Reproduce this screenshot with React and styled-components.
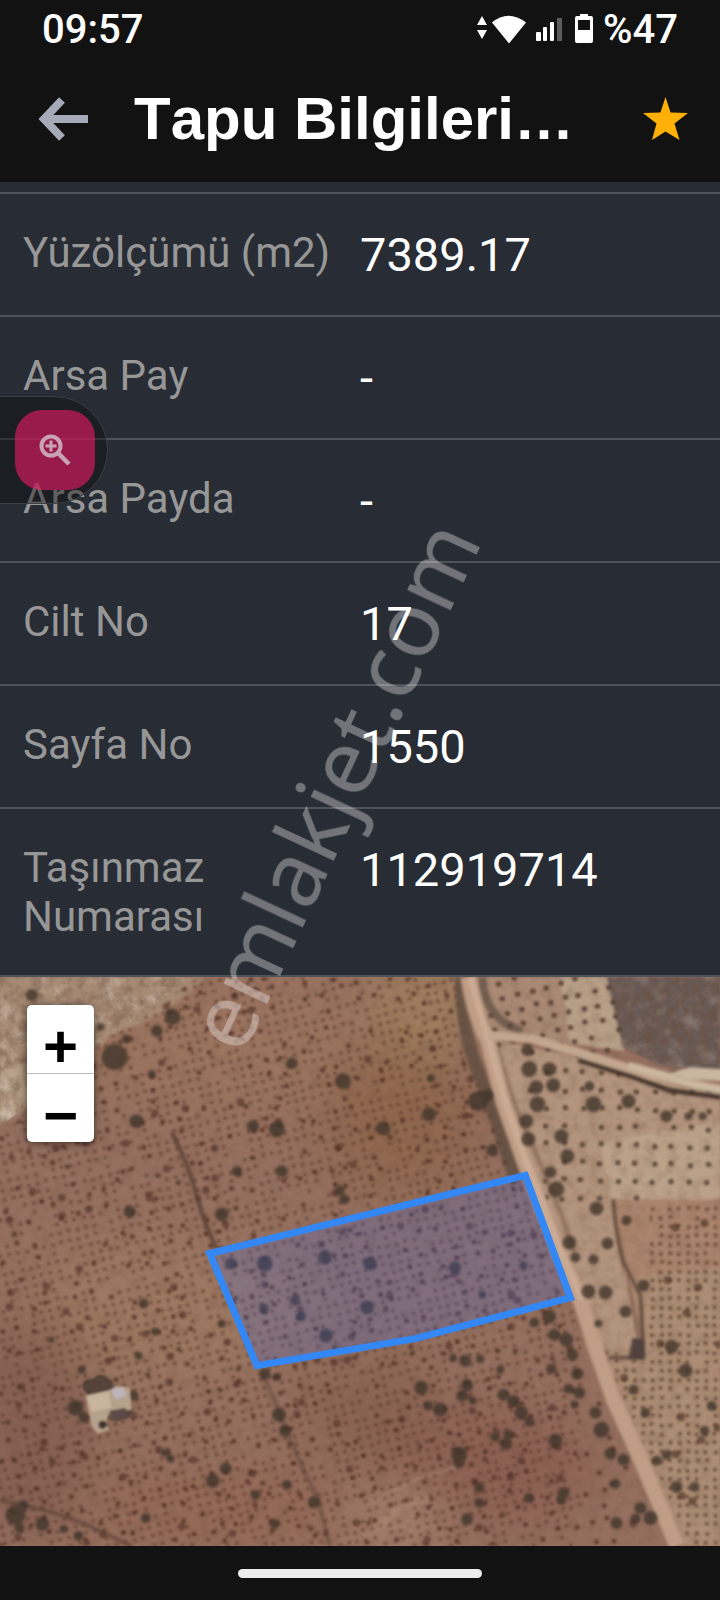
import React, { useState } from 'react';
import styled, { createGlobalStyle } from 'styled-components';

const GlobalStyle = createGlobalStyle`
  * {
    box-sizing: border-box;
  }

  body {
    margin: 0;
    background: #121212;
    font-family: Roboto, 'Noto Sans', sans-serif;
  }

  button {
    font: inherit;
    border: none;
    padding: 0;
    background: none;
    cursor: pointer;
  }
`;

const deedRows = [
  { label: 'Yüzölçümü (m2)', value: '7389.17' },
  { label: 'Arsa Pay', value: '-' },
  { label: 'Arsa Payda', value: '-' },
  { label: 'Cilt No', value: '17' },
  { label: 'Sayfa No', value: '1550' },
  { label: 'Taşınmaz Numarası', value: '112919714' },
];

// small seeded generator so the trees stay in place between renders
const makeRandom = (seed) => {
  let s = seed;
  return () => {
    s = (s * 16807) % 2147483647;
    return s / 2147483647;
  };
};

// rows of trees as one path of zero length strokes
const grove = (seed, [x0, y0, x1, y1], step, angle, jitter, keep) => {
  const rnd = makeRandom(seed);
  const cos = Math.cos(angle);
  const sin = Math.sin(angle);
  const cx = (x0 + x1) / 2;
  const cy = (y0 + y1) / 2;
  const half = Math.hypot(x1 - x0, y1 - y0) / 2;
  let d = '';
  for (let u = -half; u < half; u += step) {
    for (let v = -half; v < half; v += step) {
      const a = u + (rnd() - 0.5) * jitter;
      const b = v + (rnd() - 0.5) * jitter;
      const x = cx + a * cos - b * sin;
      const y = cy + a * sin + b * cos;
      const kept = rnd() < keep;
      if (kept && x > x0 && x < x1 && y > y0 && y < y1) {
        d += `M${x.toFixed(1)} ${y.toFixed(1)}h.01`;
      }
    }
  }
  return d;
};

const westSmall = grove(11, [0, 0, 580, 568], 9, -0.24, 2, 0.75);
const westMid = grove(23, [0, 0, 640, 568], 17, -0.24, 11, 0.6);
const westLarge = grove(37, [0, 0, 640, 568], 36, -0.3, 34, 0.45);
const northSmall = grove(5, [490, 0, 620, 80], 15, -0.25, 3, 0.95);
const paleMid = grove(71, [530, 92, 720, 222], 18, 0.02, 3, 0.9);
const eastSmall = grove(83, [590, 225, 720, 568], 9, 0, 2, 0.85);
const eastLarge = grove(97, [580, 235, 720, 568], 27, 0.1, 20, 0.6);

// [x, y, radius]
const trees = [
  [115, 80, 13], [173, 40, 8], [157, 54, 6], [137, 144, 7], [277, 152, 8], [343, 104, 8],
  [292, 86, 6], [253, 149, 6], [237, 194, 5], [282, 194, 6], [222, 237, 7], [130, 234, 6],
  [340, 213, 5], [344, 222, 5], [32, 18, 6], [101, 50, 4], [126, 62, 4], [152, 97, 4],
  [231, 286, 6], [265, 286, 8], [325, 280, 7], [370, 286, 7], [455, 290, 6], [523, 288, 4],
  [264, 331, 5], [295, 323, 5], [301, 339, 5], [326, 358, 7], [367, 330, 7], [482, 317, 4],
  [478, 124, 10], [487, 118, 6], [429, 137, 7], [383, 151, 7], [431, 101, 4], [492, 173, 6],
  [527, 73, 6], [529, 92, 8], [549, 92, 7], [536, 110, 7], [553, 108, 7], [589, 109, 5],
  [537, 127, 8], [593, 127, 8], [628, 124, 7], [666, 139, 6], [702, 139, 4], [688, 139, 4],
  [526, 144, 7], [528, 162, 7], [561, 159, 7], [567, 179, 7], [550, 195, 6], [556, 212, 8],
  [596, 231, 7], [569, 265, 7], [607, 266, 6], [626, 243, 5], [575, 280, 5], [593, 282, 5],
  [588, 314, 7], [605, 315, 7], [625, 334, 6], [598, 346, 4], [671, 369, 7], [685, 393, 7],
  [643, 308, 6], [549, 339, 7], [534, 345, 5], [554, 357, 6], [566, 362, 7], [572, 377, 6],
  [551, 391, 5], [577, 396, 6], [568, 411, 5], [579, 415, 6], [574, 427, 4], [595, 435, 6],
  [601, 452, 8], [555, 463, 7], [610, 476, 6], [623, 482, 6], [465, 383, 6], [453, 380, 4],
  [480, 381, 4], [500, 392, 4], [421, 410, 7], [428, 428, 5], [440, 432, 7], [462, 418, 6],
  [467, 408, 6], [473, 423, 4], [503, 417, 6], [513, 423, 6], [521, 435, 7], [529, 444, 5],
  [495, 459, 5], [506, 466, 6], [508, 457, 5], [459, 477, 8], [459, 484, 6], [479, 510, 5],
  [479, 525, 5], [529, 520, 5], [563, 515, 6], [561, 522, 5], [615, 506, 5], [616, 545, 6],
  [650, 540, 7], [640, 530, 6], [635, 541, 5], [676, 509, 6], [694, 509, 5], [666, 477, 5],
  [656, 483, 5], [645, 435, 5], [633, 412, 5], [711, 428, 5], [704, 453, 5], [467, 541, 6],
  [16, 537, 10], [24, 527, 5], [43, 546, 7], [20, 550, 5], [79, 558, 5], [64, 551, 4],
  [146, 540, 5], [213, 503, 7], [226, 491, 6], [256, 517, 5], [287, 507, 5], [314, 524, 6],
  [275, 546, 5], [279, 437, 7], [285, 453, 6], [265, 396, 6], [277, 399, 4], [144, 326, 5],
  [52, 362, 3], [82, 392, 4], [139, 378, 4], [222, 346, 4], [155, 354, 4], [165, 475, 4],
  [171, 481, 4], [76, 430, 8], [134, 418, 5], [102, 404, 7], [90, 408, 7], [84, 440, 5],
];

const Page = styled.div`
  position: relative;
  display: flex;
  flex-direction: column;
  min-height: 100vh;
  overflow: hidden;
  background: #121212;
`;

const StatusBar = styled.div`
  display: flex;
  align-items: center;
  justify-content: space-between;
  height: 60px;
  padding: 0 42px;
  color: #fff;
  font-size: 40px;
  font-weight: 500;
  line-height: 60px;
`;

const StatusIcons = styled.div`
  display: flex;
  align-items: center;
  gap: 8px;
`;

const Header = styled.header`
  display: flex;
  align-items: center;
  height: 122px;
  padding: 0 28px 4px 36px;
`;

const HeaderButton = styled.button`
  display: flex;
  flex: none;
  color: ${({ $color }) => $color};
`;

const Title = styled.h1`
  flex: 1;
  min-width: 0;
  margin: 0 24px 0 44px;
  overflow: hidden;
  color: #fff;
  font-family: 'Liberation Sans', Arial, sans-serif;
  font-size: 60px;
  line-height: 72px;
  font-weight: 700;
  font-kerning: none;
  white-space: nowrap;
`;

const Details = styled.main`
  padding-top: 10px;
  background: #282c34;
`;

const DeedTable = styled.table`
  width: 100%;
  border-bottom: 2px solid #4e5259;
  border-spacing: 0;
  table-layout: fixed;
`;

const DeedRow = styled.tr`
  th,
  td {
    padding-top: 34px;
    padding-bottom: 34px;
    border-top: 2px solid #4e5259;
    vertical-align: top;
    text-align: left;
  }
`;

const Label = styled.th`
  width: 50%;
  padding: 0 8px 0 23px;
  color: #979797;
  font-size: 42px;
  line-height: 49px;
  font-weight: 400;
`;

const Value = styled.td`
  padding: 0 8px 0 0;
  color: #fff;
  font-size: 47px;
  line-height: 53px;
`;

const MapArea = styled.section`
  position: relative;
  flex: 1;
  min-height: 480px;
  overflow: hidden;
  background: #8f6a55;
`;

const MapCanvas = styled.svg`
  position: absolute;
  inset: 0;
  display: block;
  width: 100%;
  height: 100%;
`;

const ZoomControl = styled.div`
  position: absolute;
  top: 28px;
  left: 27px;
  display: flex;
  flex-direction: column;
  width: 67px;
  border-radius: 5px;
  background: #fff;
  box-shadow: 0 1px 8px rgba(0, 0, 0, 0.6);
`;

const ZoomButton = styled.button`
  height: 68px;
  padding-top: 16px;
  color: #000;
  font-family: 'Liberation Sans', Arial, sans-serif;
  font-size: 60px;
  font-weight: 700;
  line-height: 52px;

  & + & {
    height: 69px;
    border-top: 1px solid #bbb;
  }
`;

const NavBar = styled.div`
  display: flex;
  justify-content: center;
  align-items: center;
  height: 54px;
`;

const HomeIndicator = styled.div`
  width: 34%;
  height: 9px;
  border-radius: 5px;
  background: #ededed;
`;

const FloatingTab = styled.div`
  position: absolute;
  top: 396px;
  left: -2px;
  padding: 13px 12px 13px 16px;
  border: 1px solid #3a3e45;
  border-radius: 0 54px 54px 0;
  background: rgba(8, 8, 8, 0.38);
`;

const FloatingButton = styled.button`
  display: flex;
  align-items: center;
  justify-content: center;
  width: 80px;
  height: 80px;
  border-radius: 27px;
  background: rgba(230, 24, 101, 0.62);
  color: #c7a3b4;
`;

const Watermark = styled.div`
  position: absolute;
  top: 49%;
  left: 46%;
  color: rgba(255, 255, 255, 0.34);
  font-family: 'Noto Sans', 'Open Sans', sans-serif;
  font-size: 90px;
  line-height: 120px;
  pointer-events: none;
  transform: translate(-50%, -50%) rotate(-65deg);
`;

const SystemIcons = () => (
  <svg width="118" height="32" viewBox="0 0 118 32" fill="#fff" aria-hidden="true">
    <path d="M5 2l5 9H0z" />
    <path d="M0 16h10l-5 9z" />
    <path d="M15 8.500Q31-5 49 8.500L32 29.500z" />
    <rect x="59" y="18" width="5" height="9" rx="1" />
    <rect x="66" y="13" width="4" height="14" rx="1" />
    <rect x="73" y="8" width="4" height="19" rx="1" />
    <rect x="80" y="4" width="5" height="23" fill="#5c5c5c" />
    <path
      fillRule="evenodd"
      d="M103 0h8v2h3q2 0 2 2v23q0 2-2 2h-14q-2 0-2-2V4q0-2 2-2h3zM101 6v10h12V6z"
    />
  </svg>
);

const BackIcon = () => (
  <svg width="54" height="48" viewBox="0 0 54 48" fill="none" stroke="currentColor" strokeWidth="8" aria-hidden="true">
    <path d="M26 5L8 24L26 43M8 24H52" />
  </svg>
);

const StarIcon = () => (
  <svg width="52" height="48" viewBox="0 0 52 48" fill="currentColor" aria-hidden="true">
    <path d="M25.500 2L30.500 17.500L48 18L34.500 28.500L39.500 45L25.500 36.500L12 45L16.500 28.500L3 18L20.500 17.500z" />
  </svg>
);

const MagnifyIcon = () => (
  <svg width="36" height="36" viewBox="0 0 36 36" fill="none" stroke="currentColor" strokeWidth="4" aria-hidden="true">
    <circle cx="14" cy="14" r="9.500" />
    <path d="M21 21L32 32" strokeWidth="4.500" />
    <path d="M14 8.500V19.500M8.500 14H19.500" strokeWidth="3" />
  </svg>
);

const SatelliteMap = () => (
  <MapCanvas viewBox="0 0 720 568" preserveAspectRatio="xMidYMid slice" role="img" aria-label="Parsel haritası">
    <defs>
      <filter id="soft" x="-10%" y="-10%" width="120%" height="120%">
        <feGaussianBlur stdDeviation="1.100" />
      </filter>
      <filter id="softer" x="-10%" y="-10%" width="120%" height="120%">
        <feGaussianBlur stdDeviation="1.800" />
      </filter>
      <filter id="patch" x="-30%" y="-30%" width="160%" height="160%">
        <feGaussianBlur stdDeviation="26" />
      </filter>
      <filter id="grain" x="0" y="0" width="100%" height="100%">
        <feTurbulence type="fractalNoise" baseFrequency="0.09" numOctaves="4" seed="4" />
        <feColorMatrix values="0 0 0 0 0.15  0 0 0 0 0.08  0 0 0 0 0.05  1.600 0 0 0 -0.680" />
      </filter>
      <filter id="rough" x="0" y="0" width="100%" height="100%">
        <feTurbulence type="fractalNoise" baseFrequency="0.06" numOctaves="4" seed="9" />
        <feColorMatrix values="0 0 0 0 0.9  0 0 0 0 0.82  0 0 0 0 0.74  0 2.400 0 0 -1.100" />
      </filter>
      <clipPath id="westClip">
        <path d="M0 160L110 60L200 0H456L470 85L512 190L556 280L572 330L600 410L655 568H0z" />
      </clipPath>
      <clipPath id="eastClip">
        <path d="M650 222H720V568H690L600 370L645 385z" />
      </clipPath>
      <clipPath id="hillClip">
        <path d="M610 0L623 70L660 88L720 94V0z" />
      </clipPath>
      <clipPath id="rockClip">
        <path d="M0 0H190L100 70L0 150z" />
      </clipPath>
    </defs>

    {/* ground */}
    <rect width="720" height="568" fill="#957060" />
    <g filter="url(#patch)">
      <ellipse cx="230" cy="70" rx="170" ry="70" fill="#9b7561" />
      <ellipse cx="400" cy="140" rx="80" ry="80" fill="#90674f" />
      <ellipse cx="425" cy="30" rx="50" ry="50" fill="#a1805f" />
      <ellipse cx="170" cy="330" rx="140" ry="70" fill="#9d7862" />
      <ellipse cx="30" cy="450" rx="60" ry="110" fill="#866152" />
      <ellipse cx="480" cy="490" rx="120" ry="60" fill="#8c6153" />
      <ellipse cx="220" cy="530" rx="140" ry="40" fill="#946957" />
      <ellipse cx="400" cy="540" rx="50" ry="30" fill="#a68370" />
      <ellipse cx="370" cy="430" rx="70" ry="50" fill="#8a6452" />
    </g>
    <g filter="url(#softer)">
      <path d="M0 0H205Q170 40 110 58Q70 110 0 148z" fill="#a58973" />
      <path d="M0 95L60 75L28 125L0 148z" fill="#b49d85" />
      <path d="M466 0H612L624 74L560 66L490 56z" fill="#aa8a74" />
      <path d="M560 0H612L624 74L570 66z" fill="#b7a088" />
      <path d="M490 62L600 84L720 120V222H612L640 385H600L560 290L520 180z" fill="#b3947e" />
      <path d="M600 165L720 145V222H612z" fill="#bba189" />
      <path d="M612 222H720V568H672L600 370H644z" fill="#ad8d74" />
      <path d="M612 222H720V290L622 300z" fill="#ab846d" />
      <path d="M606 0L622 70L660 88L720 96V0z" fill="#6b5a54" />
    </g>
    <g clipPath="url(#rockClip)">
      <rect width="200" height="150" filter="url(#rough)" opacity="0.45" />
      <rect width="200" height="150" filter="url(#grain)" opacity="0.5" />
    </g>

    {/* orchards */}
    <g fill="none" strokeLinecap="round" filter="url(#soft)">
      <g clipPath="url(#westClip)" stroke="#4f2f25">
        <path d={westSmall} strokeWidth="3.600" opacity="0.55" />
        <path d={westMid} strokeWidth="5" opacity="0.7" />
        <path d={westLarge} strokeWidth="7.500" opacity="0.6" />
      </g>
      <path d={northSmall} stroke="#543c30" strokeWidth="5.500" opacity="0.8" />
      <path d={paleMid} stroke="#4a382b" strokeWidth="5.500" opacity="0.75" />
      <g clipPath="url(#eastClip)" stroke="#4e3628">
        <path d={eastSmall} strokeWidth="4" opacity="0.65" />
        <path d={eastLarge} strokeWidth="8" opacity="0.7" />
      </g>
    </g>
    <rect width="720" height="568" filter="url(#grain)" opacity="0.3" />
    <g clipPath="url(#hillClip)">
      <rect x="600" width="120" height="100" filter="url(#grain)" opacity="0.8" />
      <rect x="600" width="120" height="100" filter="url(#rough)" opacity="0.2" />
    </g>

    {/* roads, hedges and walls */}
    <g fill="none" filter="url(#softer)" strokeLinejoin="round">
      <path d="M461 0Q462 50 474 84L484 110L500 155L516 205" stroke="#5b4a3f" strokeWidth="13" opacity="0.75" />
      <path d="M482 0Q484 42 522 54" stroke="#5d4b40" strokeWidth="8" opacity="0.7" />
      <path d="M496 66Q508 115 522 145T562 240L574 275" stroke="#80604e" strokeWidth="5" opacity="0.6" />
      <path d="M468 0Q475 42 487 62L503 125L523 182L560 279L580 322L593 365L613 422L637 475L660 529L676 568" stroke="#bf9d86" strokeWidth="15" />
      <path d="M470 0L488 62L505 125L525 182L562 279L582 322" stroke="#cbab94" strokeWidth="7" />
      <path d="M488 58L533 62L593 80L647 97L693 107L720 112" stroke="#c3a68f" strokeWidth="9" />
      <path d="M578 83L630 99L668 113L720 120" stroke="#4a382e" strokeWidth="5" />
      <path d="M628 88L664 98L690 107L722 113" stroke="#cbb79f" strokeWidth="7" />
      <path d="M668 96L690 90L722 92V104L690 102z" fill="#c9b7a2" />
      <path d="M172 155Q188 185 196 215T217 272" stroke="#593e33" strokeWidth="4" opacity="0.85" />
      <path d="M262 394L280 435L293 469L318 522L330 568" stroke="#5a4136" strokeWidth="4" opacity="0.5" />
      <path d="M0 522Q60 534 90 548T132 568" stroke="#5b4236" strokeWidth="4" opacity="0.7" />
      <path d="M613 222Q614 250 623 285L640 318L643 380H608" stroke="#5a4438" strokeWidth="4" opacity="0.8" />
      <path d="M632 360L644 362V382H628z" fill="#51423c" />
      <path d="M372 524L420 500L460 488" stroke="#b89a84" strokeWidth="3" opacity="0.35" />
      <path d="M366 560L400 530L430 520" stroke="#b69680" strokeWidth="8" opacity="0.25" />
    </g>

    <g fill="#3f3429" opacity="0.8" filter="url(#softer)">
      {trees.map(([x, y, r]) => (
        <circle key={`${x}-${y}`} cx={x} cy={y} r={r} />
      ))}
    </g>

    {/* farm house */}
    <g filter="url(#soft)">
      <path d="M84 408L98 398L112 402L116 412L88 418zM112 436L134 430L130 440L116 444z" fill="#54433a" />
      <path d="M86 418L112 412L116 408L130 410L132 432L110 434L106 446L110 452L98 456L92 448z" fill="#b6a18c" />
      <path d="M87 418L109 414L112 430L92 434z" fill="#c9b59d" />
      <path d="M111 412L124 409L127 418L116 422z" fill="#bcb4b8" />
      <path d="M110 433L126 430L128 438L112 444z" fill="#5d4c48" />
      <circle cx="103" cy="447" r="4" fill="#41362d" />
    </g>

    <path
      d="M210 276L525 198L570 320L415 361L257 388z"
      fill="#3366ee"
      fillOpacity="0.2"
      stroke="#3388f6"
      strokeWidth="7"
      strokeLinejoin="miter"
    />
  </MapCanvas>
);

const App = () => {
  const [favorite, setFavorite] = useState(true);

  return (
    <Page>
      <GlobalStyle />
      <StatusBar>
        <span>09:57</span>
        <StatusIcons>
          <SystemIcons />
          <span>%47</span>
        </StatusIcons>
      </StatusBar>

      <Header>
        <HeaderButton type="button" aria-label="Geri" $color="#a6a9b8">
          <BackIcon />
        </HeaderButton>
        <Title>Tapu Bilgileri…</Title>
        <HeaderButton
          type="button"
          aria-label="Favori"
          aria-pressed={favorite}
          $color={favorite ? '#ffb007' : '#a6a9b8'}
          onClick={() => setFavorite(!favorite)}
        >
          <StarIcon />
        </HeaderButton>
      </Header>

      <Details>
        <DeedTable>
          <tbody>
            {deedRows.map((row) => (
              <DeedRow key={row.label}>
                <Label scope="row">{row.label}</Label>
                <Value>{row.value}</Value>
              </DeedRow>
            ))}
          </tbody>
        </DeedTable>
      </Details>

      <MapArea>
        <SatelliteMap />
        <ZoomControl>
          <ZoomButton type="button" aria-label="Yakınlaştır">+</ZoomButton>
          <ZoomButton type="button" aria-label="Uzaklaştır">−</ZoomButton>
        </ZoomControl>
      </MapArea>

      <NavBar>
        <HomeIndicator />
      </NavBar>

      <FloatingTab>
        <FloatingButton type="button" aria-label="Büyüt">
          <MagnifyIcon />
        </FloatingButton>
      </FloatingTab>
      <Watermark>emlakjet.com</Watermark>
    </Page>
  );
};

export default App;
